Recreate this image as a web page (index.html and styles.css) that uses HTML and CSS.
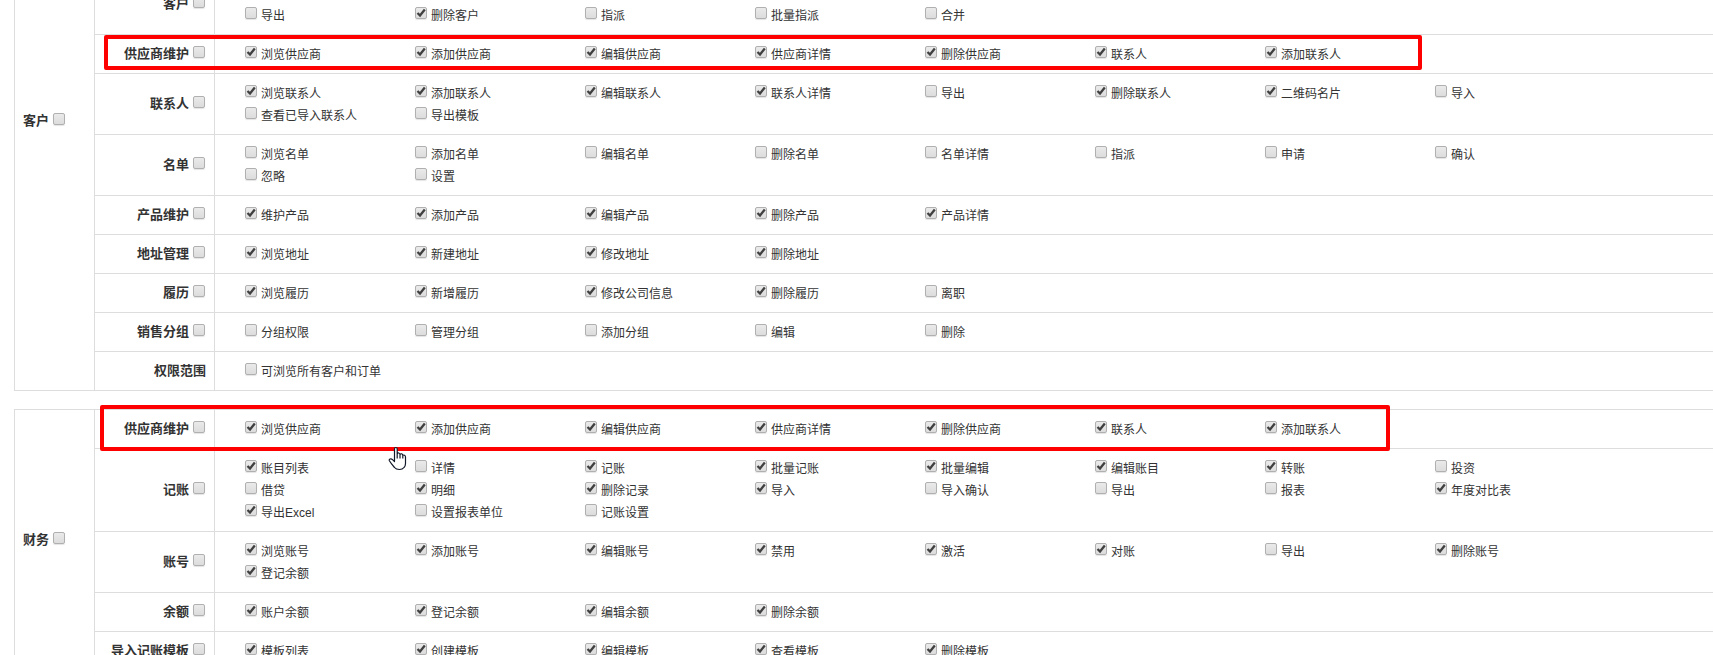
FILE: index.html
```html
<!DOCTYPE html>
<html lang="zh-CN">
<head>
<meta charset="utf-8">
<title>权限维护</title>
<link rel="stylesheet" href="styles.css">
</head>
<body>
<main class="page">
  <form class="privileges" id="privileges"></form>
  <div class="mark mark-first"></div>
  <div class="mark mark-second"></div>
  <svg class="pointer" viewBox="0 0 19 25" width="19" height="25" aria-hidden="true">
    <path d="M6.5 15.5V3Q6.500 1.500 7.800 1.500Q9.200 1.500 9.200 3V8Q9.500 6.800 10.800 7Q12 7.200 12 8.600Q12.500 7.500 13.600 7.800Q14.800 8.200 14.800 9.500Q15.500 8.700 16.500 9.200Q17.500 9.700 17.500 11V17.500Q17.500 20 16 21.500Q14.500 23.500 11.500 23.500Q8 23.500 6.500 21.500Q3 17.500 1.400 14.800Q.8 13.500 2 13Q3.300 12.500 4.500 13.600ZM9.200 8V12.500M12 8.600V12.500M14.800 9.500V12.500" fill="#fff" stroke="#111827" stroke-width="1.2" stroke-linejoin="round"/>
  </svg>
</main>
<script src="app.js"></script>
</body>
</html>
```
FILE: styles.css
```css
* {
  box-sizing: border-box;
}

body {
  margin: 0;
  background: #fff;
  color: #333;
  font-family: "Liberation Sans", "Noto Sans CJK SC", sans-serif;
  font-size: 12px;
  line-height: 22px;
}

.page {
  position: relative;
  height: 100vh;
  overflow: hidden;
  padding-left: 14px;
}

.privileges {
  display: flex;
  flex-direction: column;
  gap: 18px;
  margin-top: -149px;
}

.group {
  width: 100%;
  border-collapse: collapse;
  table-layout: fixed;
}

.col-group {
  width: 80px;
}

.col-module {
  width: 120px;
}

.group th,
.group td {
  border: 1px solid #ddd;
  padding: 8px;
  vertical-align: middle;
}

.group td {
  border-right: 0;
}

.group th {
  color: #333;
  font-size: 13px;
  font-weight: 700;
  white-space: nowrap;
}

.group .group-name {
  text-align: left;
}

.group .module-name {
  text-align: right;
}

.scrolled-out {
  height: 122px;
}

.label {
  display: inline-flex;
  align-items: center;
  gap: 4px;
}

.options {
  display: flex;
  flex-wrap: wrap;
  margin: 0;
  padding: 0 0 0 22px;
  list-style: none;
}

.options-tail {
  padding-top: 22px;
}

.options li {
  width: 170px;
}

.options .label {
  display: flex;
  padding-top: 2px;
  line-height: 20px;
}

.label input {
  appearance: none;
  flex: none;
  width: 12px;
  height: 12px;
  margin: 0 0 4px;
  border: 1px solid #b0b0b0;
  border-radius: 2px;
  background: linear-gradient(#eaeaea, #dcdcdc);
  box-shadow: 0 1px 1px #e4e4e4;
}

.options .label input {
  margin-bottom: 6px;
}

.label input:checked {
  background: url("data:image/svg+xml,%3Csvg xmlns='http://www.w3.org/2000/svg' viewBox='0 0 10 10'%3E%3Cpath d='M1.500 5L4 7.500L8.800 1.500' fill='none' stroke='%23404040' stroke-width='2.300'/%3E%3C/svg%3E") center / 10px 10px no-repeat, linear-gradient(#eaeaea, #dcdcdc);
}

.module-name .label,
.group-name .label {
  margin-right: 1px;
}

.mark {
  position: absolute;
  border: 4px solid #f00;
  border-radius: 2px;
}

.mark-first {
  left: 104px;
  top: 35px;
  width: 1318px;
  height: 35px;
}

.mark-second {
  left: 100px;
  top: 405px;
  width: 1290px;
  height: 46px;
}

.pointer {
  position: absolute;
  left: 388px;
  top: 446px;
}
```
FILE: app.js
```js
// Each module: [name, options, kind]; a leading "+" marks a granted option.
const groups = [
  {
    name: '客户', continued: true,
    modules: [
      ['客户', '导出 +删除客户 指派 批量指派 合并'],
      ['供应商维护', '+浏览供应商 +添加供应商 +编辑供应商 +供应商详情 +删除供应商 +联系人 +添加联系人'],
      ['联系人', '+浏览联系人 +添加联系人 +编辑联系人 +联系人详情 导出 +删除联系人 +二维码名片 导入 查看已导入联系人 导出模板'],
      ['名单', '浏览名单 添加名单 编辑名单 删除名单 名单详情 指派 申请 确认 忽略 设置'],
      ['产品维护', '+维护产品 +添加产品 +编辑产品 +删除产品 +产品详情'],
      ['地址管理', '+浏览地址 +新建地址 +修改地址 +删除地址'],
      ['履历', '+浏览履历 +新增履历 +修改公司信息 +删除履历 离职'],
      ['销售分组', '分组权限 管理分组 添加分组 编辑 删除'],
      ['权限范围', '可浏览所有客户和订单', 'plain']
    ]
  },
  {
    name: '财务',
    modules: [
      ['供应商维护', '+浏览供应商 +添加供应商 +编辑供应商 +供应商详情 +删除供应商 +联系人 +添加联系人'],
      ['记账', '+账目列表 详情 +记账 +批量记账 +批量编辑 +编辑账目 +转账 投资 借贷 +明细 +删除记录 +导入 导入确认 导出 报表 +年度对比表 +导出Excel 设置报表单位 记账设置'],
      ['账号', '+浏览账号 +添加账号 +编辑账号 +禁用 +激活 +对账 导出 +删除账号 +登记余额'],
      ['余额', '+账户余额 +登记余额 +编辑余额 +删除余额'],
      ['导入记账模板', '+模板列表 +创建模板 +编辑模板 +查看模板 +删除模板']
    ]
  }
];

const after = name => `<label class="label">${name}<input type="checkbox"></label>`;

const option = text => {
  const checked = text.startsWith('+');
  return `<li><label class="label"><input type="checkbox"${checked ? ' checked' : ''}>${text.replace('+', '')}</label></li>`;
};

const table = group => {
  const span = group.modules.length + (group.continued ? 1 : 0);
  const head = `<th class="group-name" rowspan="${span}">${after(group.name)}</th>`;
  const rows = group.modules.map(([name, options, kind], i) => {
    const tail = group.continued && i === 0;
    return `<tr>${!group.continued && i === 0 ? head : ''}
      <th class="module-name">${kind === 'plain' ? name : after(name)}</th>
      <td><ul class="options${tail ? ' options-tail' : ''}">${options.split(' ').map(option).join('')}</ul></td></tr>`;
  });
  if (group.continued) rows.unshift(`<tr class="scrolled-out">${head}<th></th><td></td></tr>`);
  return `<table class="group"><colgroup><col class="col-group"><col class="col-module"><col></colgroup><tbody>${rows.join('')}</tbody></table>`;
};

document.getElementById('privileges').innerHTML = groups.map(table).join('');
```
